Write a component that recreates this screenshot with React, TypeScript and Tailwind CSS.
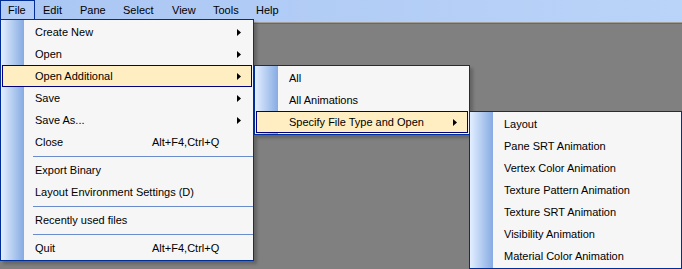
const FONT = { fontFamily: '"Liberation Sans", Arial, sans-serif' };

type Item =
  | { kind: 'item'; label: string; shortcut?: string; sub?: boolean; active?: boolean }
  | { kind: 'sep' };

const FILE_MENU: Item[] = [
  { kind: 'item', label: 'Create New', sub: true },
  { kind: 'item', label: 'Open', sub: true },
  { kind: 'item', label: 'Open Additional', sub: true, active: true },
  { kind: 'item', label: 'Save', sub: true },
  { kind: 'item', label: 'Save As...', sub: true },
  { kind: 'item', label: 'Close', shortcut: 'Alt+F4,Ctrl+Q' },
  { kind: 'sep' },
  { kind: 'item', label: 'Export Binary' },
  { kind: 'item', label: 'Layout Environment Settings (D)' },
  { kind: 'sep' },
  { kind: 'item', label: 'Recently used files' },
  { kind: 'sep' },
  { kind: 'item', label: 'Quit', shortcut: 'Alt+F4,Ctrl+Q' },
];

const OPEN_ADDITIONAL: Item[] = [
  { kind: 'item', label: 'All' },
  { kind: 'item', label: 'All Animations' },
  { kind: 'item', label: 'Specify File Type and Open', sub: true, active: true },
];

const FILE_TYPES: Item[] = [
  'Layout',
  'Pane SRT Animation',
  'Vertex Color Animation',
  'Texture Pattern Animation',
  'Texture SRT Animation',
  'Visibility Animation',
  'Material Color Animation',
].map((label) => ({ kind: 'item' as const, label }));

const BAR = [
  { label: 'Edit', w: 'w-[37px]' },
  { label: 'Pane', w: 'w-[43px]' },
  { label: 'Select', w: 'w-[49px]' },
  { label: 'View', w: 'w-[41px]' },
  { label: 'Tools', w: 'w-[43px]' },
  { label: 'Help', w: 'w-[43px]' },
];

function Arrow() {
  return (
    <svg width="4" height="7" viewBox="0 0 4 7" className="block">
      <polygon points="0,0 4,3.5 0,7" fill="#000" />
    </svg>
  );
}

function Menu({ items, className }: { items: Item[]; className: string }) {
  return (
    <div
      className={`absolute border border-[#002d96] p-px bg-[linear-gradient(to_right,#e3efff_0px,#86abe3_23px,#f6f6f6_23px)] shadow-[3px_3px_3px_rgba(0,0,0,0.22)] ${className}`}
    >
      {items.map((it, i) =>
        it.kind === 'sep' ? (
          <div key={i} className="h-[6px] flex items-center pl-[31px] -mr-px">
            <div className="h-px w-full bg-[#6a8ccb]" />
          </div>
        ) : (
          <div
            key={i}
            className={`h-[22px] flex items-center pl-[32px] pr-[10px] border text-[11px] text-black ${
              it.active ? 'border-[#000080] bg-[#ffeec2]' : 'border-transparent'
            }`}
          >
            <span className={it.shortcut ? 'w-[117px]' : 'flex-1'}>{it.label}</span>
            {it.shortcut && <span className="flex-1">{it.shortcut}</span>}
            {it.sub && <Arrow />}
          </div>
        )
      )}
    </div>
  );
}

export default function App() {
  return (
    <div className="relative w-[682px] h-[269px] bg-[#808080] overflow-hidden" style={FONT}>
      <div className="h-[22px] flex items-stretch bg-[linear-gradient(to_right,#aac6f3,#bad3f8)] text-[11px] text-black">
        <div className="w-[35px] h-[20px] border border-[#002d96] border-b-0 pl-[7px] flex items-center bg-[#b3cdf6]">
          File
        </div>
        {BAR.map((b) => (
          <div key={b.label} className={`${b.w} h-[20px] pl-[8px] flex items-center`}>
            {b.label}
          </div>
        ))}
      </div>
      <div className="h-px bg-[#a19f96]" />
      <div className="h-px bg-[#6c6861]" />

      <Menu items={FILE_MENU} className="left-0 top-[19px] w-[254px]" />
      <Menu items={OPEN_ADDITIONAL} className="left-[254px] top-[65px] w-[216px]" />
      <Menu items={FILE_TYPES} className="left-[469px] top-[111px] w-[213px]" />
    </div>
  );
}
